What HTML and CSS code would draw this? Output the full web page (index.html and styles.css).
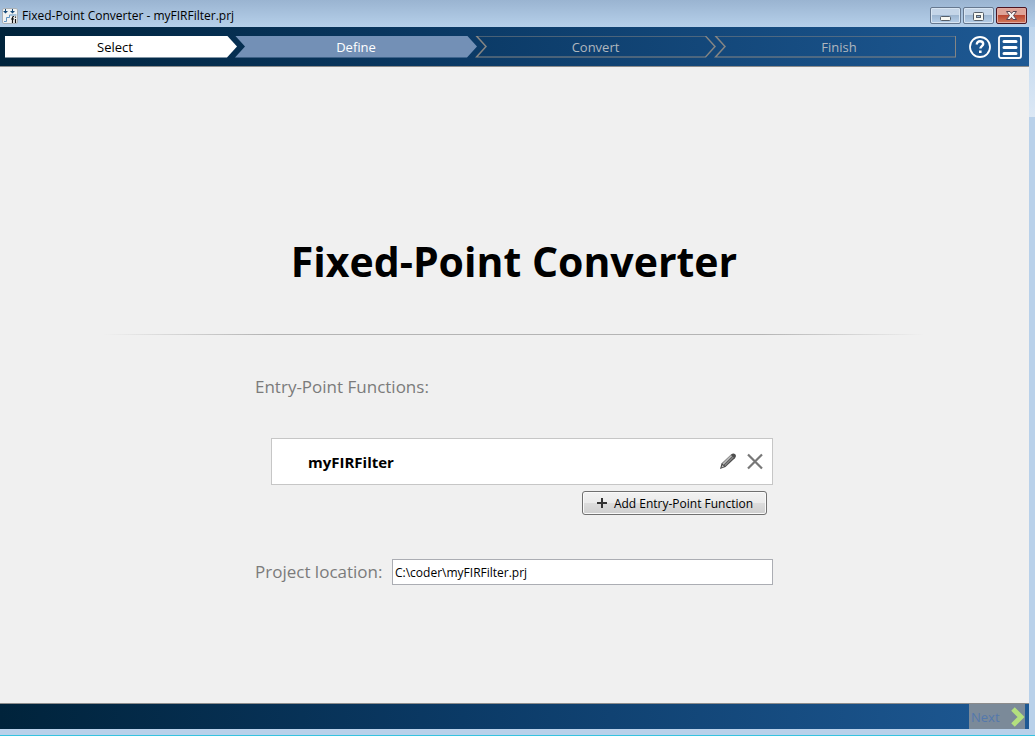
FILE: index.html
```html
<!DOCTYPE html>
<html lang="en">
<head>
<meta charset="utf-8">
<meta name="viewport" content="width=device-width, initial-scale=1">
<title>Fixed-Point Converter - myFIRFilter.prj</title>
<link rel="stylesheet" href="styles.css">
</head>
<body>
<div class="window">
  <header class="titlebar">
    <svg class="app-icon" width="16" height="16" viewBox="0 0 16 16" aria-hidden="true">
      <rect x="0.5" y="0.5" width="15" height="15" rx="1.5" fill="#f1f2f2" stroke="#a9b0b6"/>
      <path d="M3 1h1v2h2L3.500 5.500 1 3h2zM10 1h1v2h2l-2.500 2.500L8 3h2z" fill="#174a78"/>
      <path d="M2 13.500h2.500v-4h3v-2.500h7" fill="none" stroke="#5f93c0"/>
      <path d="M12 8.500h-.5q-1 0-1 1V15M9 11h3M13.500 11v4M13.500 8.500v1.200" fill="none" stroke="#111" stroke-width="1.200"/>
    </svg>
    <span class="title">Fixed-Point Converter - myFIRFilter.prj</span>
    <div class="window-buttons">
      <button class="wbtn" type="button" aria-label="Minimize">
        <svg width="29" height="15" viewBox="0 0 29 15"><rect x="9.500" y="8.500" width="10" height="4" rx="1" fill="#f8f8f2" stroke="#555e69"/></svg>
      </button>
      <button class="wbtn" type="button" aria-label="Maximize">
        <svg width="29" height="15" viewBox="0 0 29 15"><rect x="9.500" y="4.500" width="10" height="8" rx="1" fill="#f8f8f2" stroke="#555e69"/><rect x="12.500" y="7.500" width="4" height="2" fill="#9db6d3" stroke="#555e69"/></svg>
      </button>
      <button class="wbtn wbtn-close" type="button" aria-label="Close">
        <svg width="29" height="15" viewBox="0 0 29 15"><path d="M9.500 3.500h3.500l1.500 2 1.500-2h3.500l-3 4 3 4h-3.500l-1.500-2-1.500 2H9.500l3-4z" fill="#f6f4f2" stroke="#5b4550" stroke-linejoin="round"/></svg>
      </button>
    </div>
  </header>

  <div class="client">
    <nav class="toolbar" aria-label="Workflow">
      <div class="steps">
        <button class="step step-current" type="button">Select</button>
        <button class="step step-next" type="button">Define</button>
        <button class="step step-pending" type="button">Convert</button>
        <button class="step step-pending step-last" type="button">Finish</button>
      </div>
      <div class="tools">
        <button class="tool" type="button" aria-label="Help">
          <svg width="24" height="24" viewBox="0 0 24 24" fill="none" stroke="#fff"><circle cx="12" cy="12" r="10" stroke-width="1.800"/><path d="M8.800 9.500c0-2.100 1.300-3.200 3.200-3.200s3.200 1 3.200 2.700c0 2-2.800 2.300-2.800 4.600" stroke-width="2.400"/><path d="M11 15.500h2.600V18H11z" fill="#fff" stroke="none"/></svg>
        </button>
        <button class="tool" type="button" aria-label="Menu">
          <svg width="24" height="24" viewBox="0 0 24 24" fill="none" stroke="#fff"><rect x="1" y="1" width="22" height="22" rx="2" stroke-width="1.800"/><path d="M6 6.500h12M6 12.500h12M6 18.500h12" stroke-width="3" stroke-linecap="round"/></svg>
        </button>
      </div>
    </nav>

    <main class="content">
      <h1 class="heading">Fixed-Point Converter</h1>
      <hr class="rule">
      <form class="form">
        <h2 class="label">Entry-Point Functions:</h2>
        <div class="functions">
          <div class="function">
            <span class="function-name">myFIRFilter</span>
            <button class="icon-button" type="button" aria-label="Edit">
              <svg width="18" height="18" viewBox="0 0 18 18"><path d="M1 16l1.500-5.500L12 1.500q2.400-2 4.200-.3 1.600 1.800-.3 4L6.500 14z" fill="#4d4d4d"/><path d="M4 11.200l8.500-8.500" stroke="#bbb" stroke-width="1.800"/><path d="M5.800 12.500l8.500-8.500" stroke="#858585" stroke-width="1.500"/><path d="M2.500 14.500l1-2.500 1.500 1.500z" fill="#ccc"/></svg>
            </button>
            <button class="icon-button" type="button" aria-label="Remove">
              <svg width="18" height="18" viewBox="0 0 18 18"><path d="M2 1.500l14 14M16 1.500l-14 14" stroke="#777" stroke-width="2.200"/></svg>
            </button>
          </div>
          <button class="add" type="button">
            <svg width="12" height="12" viewBox="0 0 12 12" aria-hidden="true"><path d="M6 1v10M1 6h10" stroke="#333" stroke-width="2"/></svg>
            Add Entry-Point Function
          </button>
        </div>
        <div class="location">
          <label class="label" for="location">Project location:</label>
          <input class="path" id="location" type="text" value="C:\coder\myFIRFilter.prj">
        </div>
      </form>
    </main>

    <footer class="footer">
      <button class="next" type="button">Next
        <svg width="14" height="20" viewBox="0 0 14 20" aria-hidden="true"><path d="M2 2l8 8-8 8" fill="none" stroke="#b3e07e" stroke-width="5"/></svg>
      </button>
    </footer>
  </div>
</div>
</body>
</html>
```

FILE: styles.css
```css
* { box-sizing: border-box; }

body {
  margin: 0;
  font-family: "Open Sans", "Noto Sans", sans-serif;
  font-size: 12px;
  color: #000;
}

button, input { font: inherit; }
button { margin: 0; padding: 0; border: 0; background: none; }
svg { display: block; flex: none; }

.window {
  display: flex;
  flex-direction: column;
  min-height: 100vh;
  padding: 0 6px 6px 0;
  border-bottom: 1px solid #35c3e0;
  background: linear-gradient(#b6d0ea, #dce8f5 117px, #b9d1ea 117px);
}

.titlebar {
  display: flex;
  align-items: center;
  gap: 4px;
  height: 27px;
  margin-right: -6px;
  padding: 4px 8px 0 2px;
  background: linear-gradient(#9ab4d1, #b6d0ea);
}

.title { flex: 1; line-height: 16px; }

.window-buttons { display: flex; align-self: center; gap: 2px; }

.wbtn {
  width: 31px;
  height: 17px;
  border: 1px solid #66788f;
  border-radius: 2px;
  background: linear-gradient(#c4d5e8 45%, #9bb4cf 45%, #b5cee8);
  box-shadow: inset 0 0 0 1px #d8e5f2;
}

.wbtn-close {
  border-color: #4c1522;
  background: linear-gradient(#dfa397 45%, #b9412c 45%, #d27c5d);
  box-shadow: inset 0 0 0 1px #e2aaa0;
}

.client { display: flex; flex: 1; flex-direction: column; }

.toolbar, .footer { background: linear-gradient(90deg, #00233b, #0b3a66 45%, #1e5994); }

.toolbar {
  display: flex;
  align-items: center;
  gap: 12px;
  height: 40px;
  padding: 0 7px 0 5px;
  border-bottom: 1px solid #8c8c8c;
}

.steps {
  display: grid;
  flex: 1;
  grid-template-columns: 230fr 240fr 239fr 242fr;
}

.step {
  position: relative;
  height: 22px;
  margin-right: -2px;
  font-size: 13px;
  line-height: 22px;
}

.step-current {
  padding-right: 12px;
  background: #fff;
  clip-path: polygon(0 0, calc(100% - 10px) 0, 100% 50%, calc(100% - 10px) 100%, 0 100%);
}

.step-next {
  color: #fff;
  background: #7390b6;
  clip-path: polygon(0 0, calc(100% - 10px) 0, 100% 50%, calc(100% - 10px) 100%, 0 100%, 10px 50%);
}

.step-pending { color: #b0b7be; }

.step-pending::before {
  content: "";
  position: absolute;
  inset: 0;
  background: #858583;
  clip-path: polygon(evenodd,
    0 0, calc(100% - 10px) 0, 100% 50%, calc(100% - 10px) 100%, 0 100%, 10px 50%, 0 0,
    3px 1px, calc(100% - 11px) 1px, calc(100% - 2px) 50%, calc(100% - 11px) calc(100% - 1px), 3px calc(100% - 1px), 12px 50%, 3px 1px);
}

.step-last { margin-right: 0; padding-left: 8px; }

.step-last::before {
  clip-path: polygon(evenodd,
    0 0, 100% 0, 100% 100%, 0 100%, 10px 50%, 0 0,
    3px 1px, calc(100% - 1px) 1px, calc(100% - 1px) calc(100% - 1px), 3px calc(100% - 1px), 12px 50%, 3px 1px);
}

.tools { display: flex; gap: 6px; }

.content {
  display: flex;
  flex: 1;
  flex-direction: column;
  align-items: center;
  padding: 164px 1px 0 0;
  background: #f0f0f0;
}

.heading { margin: 0; font-size: 41px; line-height: 60px; }

.rule {
  width: 80%;
  height: 1px;
  margin: 43px 0 40px;
  border: 0;
  background: linear-gradient(90deg, transparent, #b4b4b4 20%, #b4b4b4 80%, transparent);
}

.form { width: 518px; max-width: 100%; }

.label {
  margin: 0;
  color: #7b7b7b;
  font-size: 17px;
  font-weight: 400;
  line-height: 24px;
}

.functions {
  display: flex;
  flex-direction: column;
  align-items: flex-end;
  gap: 6px;
  margin: 39px 0 44px 16px;
}

.function {
  display: flex;
  align-items: center;
  gap: 9px;
  width: 100%;
  height: 47px;
  padding: 0 8px 0 36px;
  border: 1px solid #c6c6c6;
  background: #fff;
}

.function-name { flex: 1; font-size: 15px; font-weight: 700; }

.add {
  display: flex;
  align-items: center;
  justify-content: center;
  gap: 6px;
  width: 185px;
  height: 24px;
  margin-right: 6px;
  border: 1px solid #707070;
  border-radius: 3px;
  background: linear-gradient(#f2f2f2, #ebebeb 50%, #dddddd 50%, #cfcfcf);
  box-shadow: inset 0 0 0 1px #fafafa;
}

.location { display: flex; align-items: center; justify-content: space-between; }

.path {
  width: 381px;
  height: 26px;
  padding: 0 2px;
  border: 1px solid #abadb3;
  background: #fff;
}

.footer {
  display: flex;
  justify-content: flex-end;
  height: 26px;
  padding-right: 4px;
  border-top: 1px solid #8c8c8c;
}

.next {
  display: flex;
  align-items: center;
  justify-content: space-between;
  width: 56px;
  padding: 0 0 0 2px;
  background: #7b8a99;
  color: #5478ac;
  font-size: 13px;
}
```
